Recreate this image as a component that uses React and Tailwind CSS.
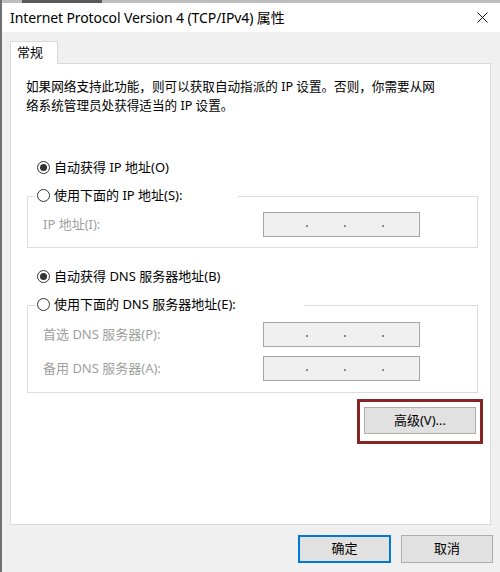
import React from 'react';

const font = "font-['Noto_Sans','Noto_Sans_CJK_SC',sans-serif]";

const Radio = ({ checked }) => (
  <span className="w-[13px] h-[13px] rounded-full border border-[#333] bg-white flex items-center justify-center shrink-0">
    {checked && <span className="w-[7px] h-[7px] rounded-full bg-[#333]" />}
  </span>
);

const RadioRow = ({ checked, label, width, cover }) => (
  <div
    className={`h-[19px] flex items-center gap-[4px] pl-[2px] ${cover ? 'bg-white relative z-10' : ''}`}
    style={{ width }}
  >
    <Radio checked={checked} />
    <span className="text-[13px] text-black leading-none">{label}</span>
  </div>
);

const IpField = () => (
  <div className="w-[157px] h-[25px] border border-[#a5a5a5] bg-[#f0f0f0] flex items-center justify-center gap-[36px] pl-[6px] pt-[2px]">
    <span className="w-[2px] h-[2px] bg-[#8a8a8a]" />
    <span className="w-[2px] h-[2px] bg-[#8a8a8a]" />
    <span className="w-[2px] h-[2px] bg-[#8a8a8a]" />
  </div>
);

const FieldRow = ({ label }) => (
  <div className="flex items-center">
    <span className="w-[220px] text-[13px] text-[#a0a0a0]">{label}</span>
    <IpField />
  </div>
);

export default function App() {
  return (
    <div className={`w-[500px] h-[572px] bg-[#f0f0f0] border-l-2 border-[#707070] flex flex-col overflow-hidden ${font}`}>
      {/* strip of the window behind */}
      <div className="h-[3px] bg-[#bdbdbd] flex">
        <div className="w-[20px]" />
        <div className="w-[80px] bg-[#5a5a5a]" />
      </div>

      {/* title bar */}
      <div className="h-[29px] bg-white flex items-center justify-between pl-[8px] pr-[12px]">
        <span className="text-[14px] text-black tracking-[-0.1px]">Internet Protocol Version 4 (TCP/IPv4) 属性</span>
        <svg width="11" height="11" viewBox="0 0 11 11">
          <path d="M0.5 0.5 L10.5 10.5 M10.5 0.5 L0.5 10.5" stroke="#111" strokeWidth="1" />
        </svg>
      </div>

      <div className="pt-[9px] pl-[8px]">
        {/* tab */}
        <div className="w-[48px] h-[23px] bg-white border border-b-0 border-[#d9d9d9] flex items-center pl-[6px] relative z-10 -mb-px">
          <span className="text-[13px] text-black">常规</span>
        </div>

        {/* panel */}
        <div className="w-[481px] h-[462px] bg-white border border-[#d9d9d9] flex flex-col pt-[13px]">
          <p className="pl-[15px] text-[12.6px] leading-[19px] text-black">
            如果网络支持此功能，则可以获取自动指派的 IP 设置。否则，你需要从网
            <br />
            络系统管理员处获得适当的 IP 设置。
          </p>

          <div className="pl-[24px] mt-[43px]">
            <RadioRow checked label="自动获得 IP 地址(O)" />
          </div>

          <div className="pl-[16px] mt-[9px]">
            <div className="pl-[8px]">
              <RadioRow label="使用下面的 IP 地址(S):" width="203px" cover />
            </div>
            <div className="w-[451px] border border-[#dcdcdc] -mt-[9px] pt-[15px] pb-[10px] pl-[15px]">
              <FieldRow label="IP 地址(I):" />
            </div>
          </div>

          <div className="pl-[24px] mt-[19px]">
            <RadioRow checked label="自动获得 DNS 服务器地址(B)" />
          </div>

          <div className="pl-[16px] mt-[9px]">
            <div className="pl-[8px]">
              <RadioRow label="使用下面的 DNS 服务器地址(E):" width="269px" cover />
            </div>
            <div className="w-[451px] border border-[#dcdcdc] -mt-[9px] pt-[16px] pb-[11px] pl-[15px] flex flex-col gap-[9px]">
              <FieldRow label="首选 DNS 服务器(P):" />
              <FieldRow label="备用 DNS 服务器(A):" />
            </div>
          </div>

          <div className="flex justify-end pr-[7px] mt-[6px]">
            <div className="border-[3px] border-[#862525] pt-[5px] pb-[7px] px-[4px]">
              <div className="w-[112px] h-[27px] bg-[#e1e1e1] border border-[#adadad] flex items-center justify-center">
                <span className="text-[13px] text-black">高级(V)...</span>
              </div>
            </div>
          </div>
        </div>
      </div>

      {/* dialog buttons */}
      <div className="flex justify-end gap-[10px] pr-[7px] mt-[10px]">
        <div className="w-[93px] h-[28px] bg-[#e1e1e1] border-2 border-[#0078d7] flex items-center justify-center">
          <span className="text-[13px] text-black">确定</span>
        </div>
        <div className="w-[92px] h-[28px] bg-[#e1e1e1] border border-[#adadad] flex items-center justify-center">
          <span className="text-[13px] text-black">取消</span>
        </div>
      </div>
    </div>
  );
}
